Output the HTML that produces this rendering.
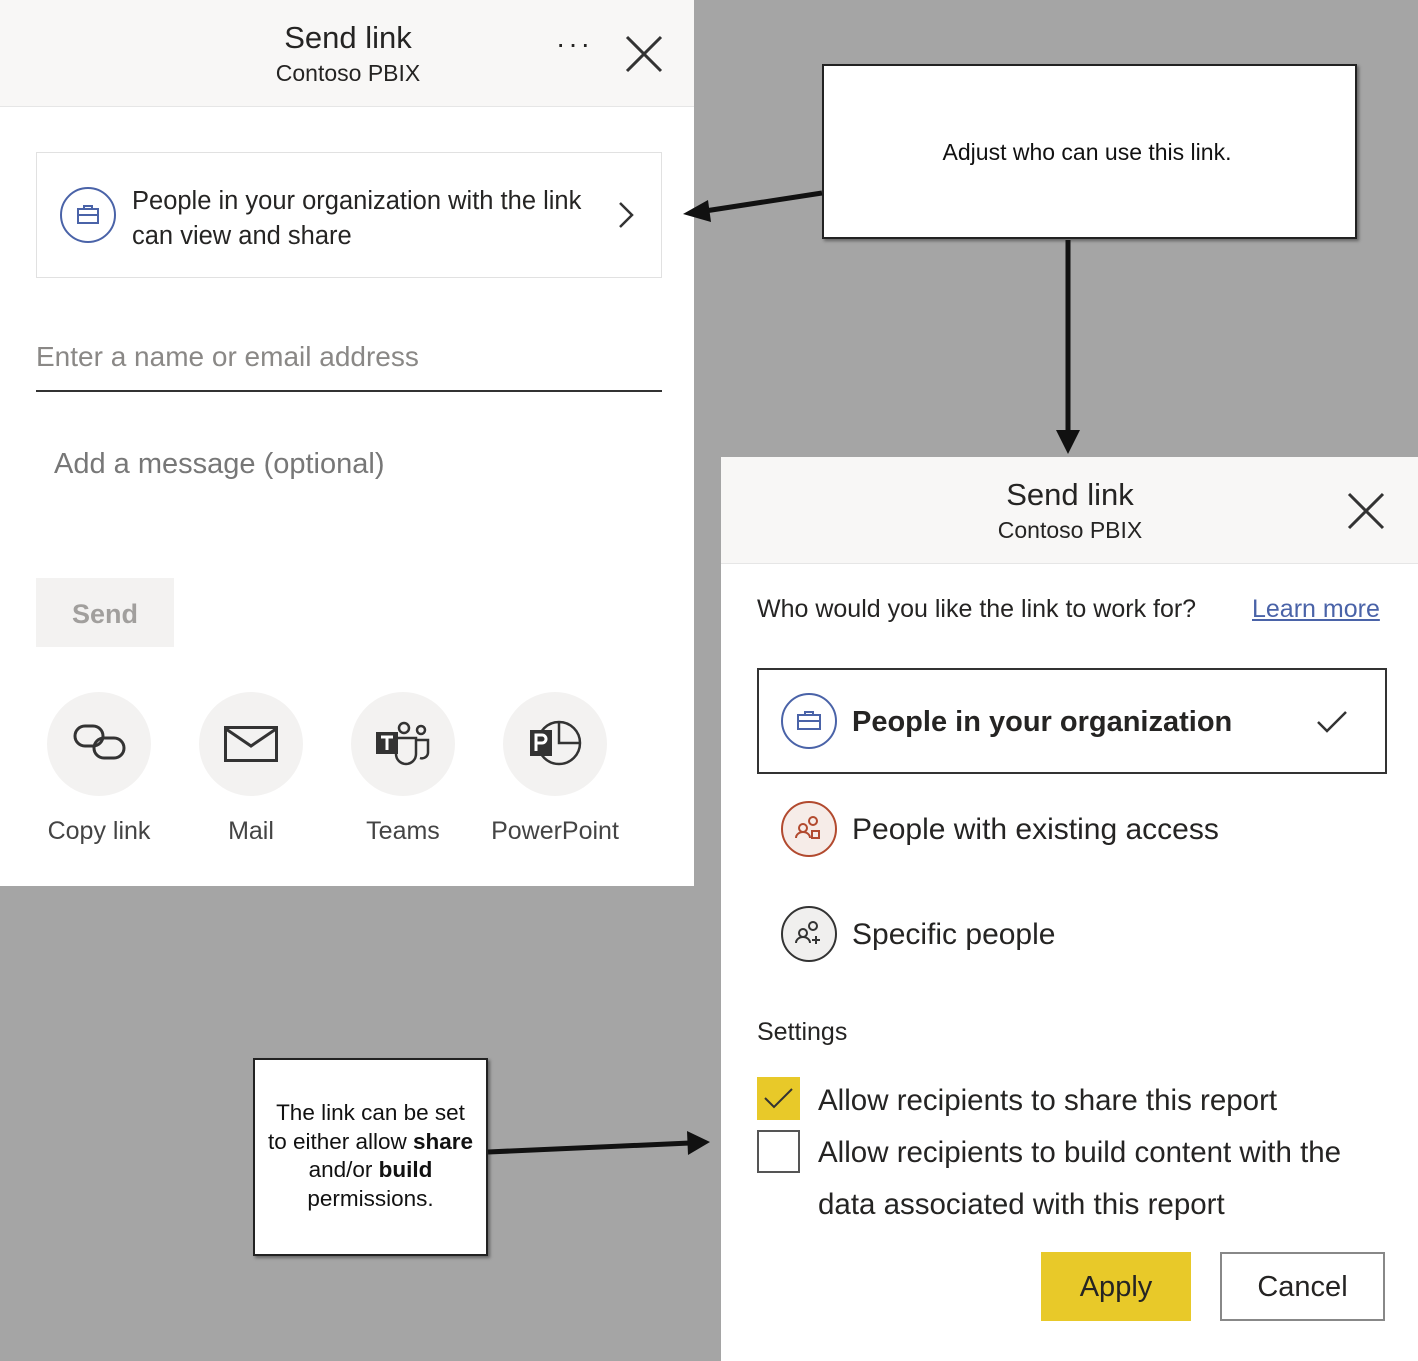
<!DOCTYPE html>
<html><head><meta charset="utf-8"><style>
*{margin:0;padding:0;box-sizing:border-box}
body{width:1418px;height:1361px;background:#a5a5a5;position:relative;overflow:hidden;font-family:"Liberation Sans","DejaVu Sans",sans-serif;color:#252423}
.a{position:absolute}
.panel{background:#fff}
.hdr{background:#f8f7f6;border-bottom:1px solid #e6e6e6}
.t1{font-size:31px;text-align:center}
.t2{font-size:23px;text-align:center}
.circ{border-radius:50%;background:#f3f2f1}
.lbl{font-size:25px;color:#444;text-align:center;width:160px}
.box{background:#fff;border:2px solid #222;box-shadow:2px 2px 3px rgba(0,0,0,.4)}
</style></head><body>
<div class="a panel" style="left:0;top:0;width:694px;height:886px"></div>
<div class="a hdr" style="left:0;top:0;width:694px;height:107px"></div>
<div class="a t1" style="left:198px;top:20px;width:300px">Send link</div>
<div class="a t2" style="left:198px;top:60px;width:300px">Contoso PBIX</div>
<div class="a" style="left:556px;top:28px;font-size:28px;letter-spacing:3px">···</div>
<svg class="a" style="left:624px;top:34px" width="40" height="40"><path d="M3 3L37 37M37 3L3 37" stroke="#333" stroke-width="3"/></svg>
<div class="a" style="left:36px;top:152px;width:626px;height:126px;border:1px solid #e1e1e1"></div>
<svg class="a" style="left:59px;top:186px" width="58" height="58"><circle cx="29" cy="29" r="27" fill="#fff" stroke="#4a63a8" stroke-width="2"/><rect x="19" y="23" width="20" height="14" fill="none" stroke="#4a63a8" stroke-width="2"/><path d="M25 23v-3h8v3M19 29h20" stroke="#4a63a8" stroke-width="2" fill="none"/></svg>
<div class="a" style="left:132px;top:184px;font-size:25.5px;line-height:35px">People in your organization with the link<br>can view and share</div>
<svg class="a" style="left:616px;top:200px" width="20" height="30"><path d="M4 3L16 15L4 27" stroke="#333" stroke-width="2.5" fill="none"/></svg>
<div class="a" style="left:36px;top:341px;font-size:28px;color:#8a8886">Enter a name or email address</div>
<div class="a" style="left:36px;top:390px;width:626px;height:2px;background:#333"></div>
<div class="a" style="left:54px;top:448px;font-size:29px;color:#777">Add a message (optional)</div>
<div class="a" style="left:36px;top:578px;width:138px;height:69px;background:#f3f2f1;color:#a19f9d;font-size:27px;text-align:center;line-height:72px;font-weight:bold">Send</div>
<div class="a circ" style="left:47px;top:692px;width:104px;height:104px"></div>
<div class="a circ" style="left:199px;top:692px;width:104px;height:104px"></div>
<div class="a circ" style="left:351px;top:692px;width:104px;height:104px"></div>
<div class="a circ" style="left:503px;top:692px;width:104px;height:104px"></div>
<svg class="a" style="left:72px;top:722px" width="56" height="42"><rect x="3" y="4" width="28" height="20" rx="10" fill="none" stroke="#333" stroke-width="3"/><rect x="22" y="16" width="30" height="20" rx="10" fill="none" stroke="#333" stroke-width="3"/></svg>
<svg class="a" style="left:224px;top:726px" width="54" height="36"><rect x="1.5" y="1.5" width="51" height="33" fill="none" stroke="#333" stroke-width="3"/><path d="M2 3L27 20L52 3" fill="none" stroke="#333" stroke-width="3"/></svg>
<svg class="a" style="left:374px;top:720px" width="58" height="50"><circle cx="30" cy="8" r="5" fill="none" stroke="#333" stroke-width="2.5"/><circle cx="47" cy="10" r="4" fill="none" stroke="#333" stroke-width="2.5"/><path d="M22 18h20v16a10 10 0 0 1-20 0z M42 20h12v12a6 6 0 0 1-8 6" fill="none" stroke="#333" stroke-width="2.5"/><rect x="2" y="12" width="22" height="22" fill="#333"/><path d="M7 17h12M13 17v13" stroke="#fff" stroke-width="3"/></svg>
<svg class="a" style="left:528px;top:720px" width="56" height="46"><circle cx="31" cy="23" r="21" fill="none" stroke="#333" stroke-width="2.5"/><path d="M31 2v21h21" fill="none" stroke="#333" stroke-width="2.5"/><rect x="2" y="10" width="22" height="26" fill="#333"/><path d="M8 31V15h6a4 4 0 0 1 0 8H8" fill="none" stroke="#fff" stroke-width="3"/></svg>
<div class="a lbl" style="left:19px;top:817px">Copy link</div>
<div class="a lbl" style="left:171px;top:817px">Mail</div>
<div class="a lbl" style="left:323px;top:817px">Teams</div>
<div class="a lbl" style="left:475px;top:817px">PowerPoint</div>

<div class="a box" style="left:822px;top:64px;width:535px;height:175px"></div>
<div class="a" style="left:822px;top:139px;width:530px;text-align:center;font-size:23px;color:#111">Adjust who can use this link.</div>
<div class="a box" style="left:253px;top:1058px;width:235px;height:198px"></div>
<div class="a" style="left:250px;top:1099px;width:241px;text-align:center;font-size:22.5px;line-height:28.5px;color:#111">The link can be set<br>to either allow <b>share</b><br>and/or <b>build</b><br>permissions.</div>
<svg class="a" style="left:0;top:0" width="1418" height="1361">
<path d="M822 193L705 211" stroke="#111" stroke-width="5"/><path d="M683 214L708 200L711 222z" fill="#111"/>
<path d="M1068 240V432" stroke="#111" stroke-width="5"/><path d="M1056 430H1080L1068 454z" fill="#111"/>
<path d="M488 1152L690 1143" stroke="#111" stroke-width="5"/><path d="M710 1142L687 1131L688 1155z" fill="#111"/>
</svg>

<div class="a panel" style="left:721px;top:457px;width:697px;height:904px"></div>
<div class="a hdr" style="left:721px;top:457px;width:697px;height:107px"></div>
<div class="a t1" style="left:920px;top:477px;width:300px">Send link</div>
<div class="a t2" style="left:920px;top:517px;width:300px">Contoso PBIX</div>
<svg class="a" style="left:1346px;top:491px" width="40" height="40"><path d="M3 3L37 37M37 3L3 37" stroke="#333" stroke-width="3"/></svg>
<div class="a" style="left:757px;top:595px;font-size:25px">Who would you like the link to work for?</div>
<div class="a" style="left:1252px;top:595px;font-size:25px;color:#4a63a8;text-decoration:underline">Learn more</div>
<div class="a" style="left:757px;top:668px;width:630px;height:106px;border:2px solid #333"></div>
<svg class="a" style="left:780px;top:692px" width="58" height="58"><circle cx="29" cy="29" r="27" fill="#fff" stroke="#4a63a8" stroke-width="2"/><rect x="18" y="23" width="22" height="14" fill="none" stroke="#4a63a8" stroke-width="2"/><path d="M25 23v-3h8v3M18 29h22" stroke="#4a63a8" stroke-width="2" fill="none"/></svg>
<div class="a" style="left:852px;top:706px;font-size:29px;font-weight:bold">People in your organization</div>
<svg class="a" style="left:1316px;top:710px" width="32" height="24"><path d="M2 12L11 21L30 2" stroke="#333" stroke-width="2.5" fill="none"/></svg>
<svg class="a" style="left:780px;top:800px" width="58" height="58"><circle cx="29" cy="29" r="27" fill="#f6ece8" stroke="#b24a2f" stroke-width="2"/><circle cx="33" cy="21" r="4" fill="none" stroke="#b24a2f" stroke-width="2"/><circle cx="23" cy="28" r="4" fill="none" stroke="#b24a2f" stroke-width="2"/><path d="M16 38a7 6 0 0 1 14 0" fill="none" stroke="#b24a2f" stroke-width="2"/><rect x="32" y="31" width="7" height="7" fill="none" stroke="#b24a2f" stroke-width="2"/></svg>
<div class="a" style="left:852px;top:813px;font-size:30px">People with existing access</div>
<svg class="a" style="left:780px;top:905px" width="58" height="58"><circle cx="29" cy="29" r="27" fill="#f0efee" stroke="#333" stroke-width="2"/><circle cx="33" cy="21" r="4" fill="none" stroke="#333" stroke-width="2"/><circle cx="23" cy="28" r="4" fill="none" stroke="#333" stroke-width="2"/><path d="M16 38a7 6 0 0 1 14 0M36 31v8M32 35h8" fill="none" stroke="#333" stroke-width="2"/></svg>
<div class="a" style="left:852px;top:918px;font-size:30px">Specific people</div>
<div class="a" style="left:757px;top:1018px;font-size:25px">Settings</div>
<div class="a" style="left:757px;top:1077px;width:43px;height:43px;background:#e8c929"></div>
<svg class="a" style="left:763px;top:1087px" width="32" height="24"><path d="M2 11L11 20L29 2" stroke="#333" stroke-width="2" fill="none"/></svg>
<div class="a" style="left:757px;top:1130px;width:43px;height:43px;border:2px solid #555;background:#fff"></div>
<div class="a" style="left:818px;top:1075px;font-size:29.5px;line-height:52px">Allow recipients to share this report<br>Allow recipients to build content with the<br>data associated with this report</div>
<div class="a" style="left:1041px;top:1252px;width:150px;height:69px;background:#e8c929;font-size:29px;text-align:center;line-height:71px">Apply</div>
<div class="a" style="left:1220px;top:1252px;width:165px;height:69px;border:2px solid #888;font-size:29px;text-align:center;line-height:67px">Cancel</div>
</body></html>
